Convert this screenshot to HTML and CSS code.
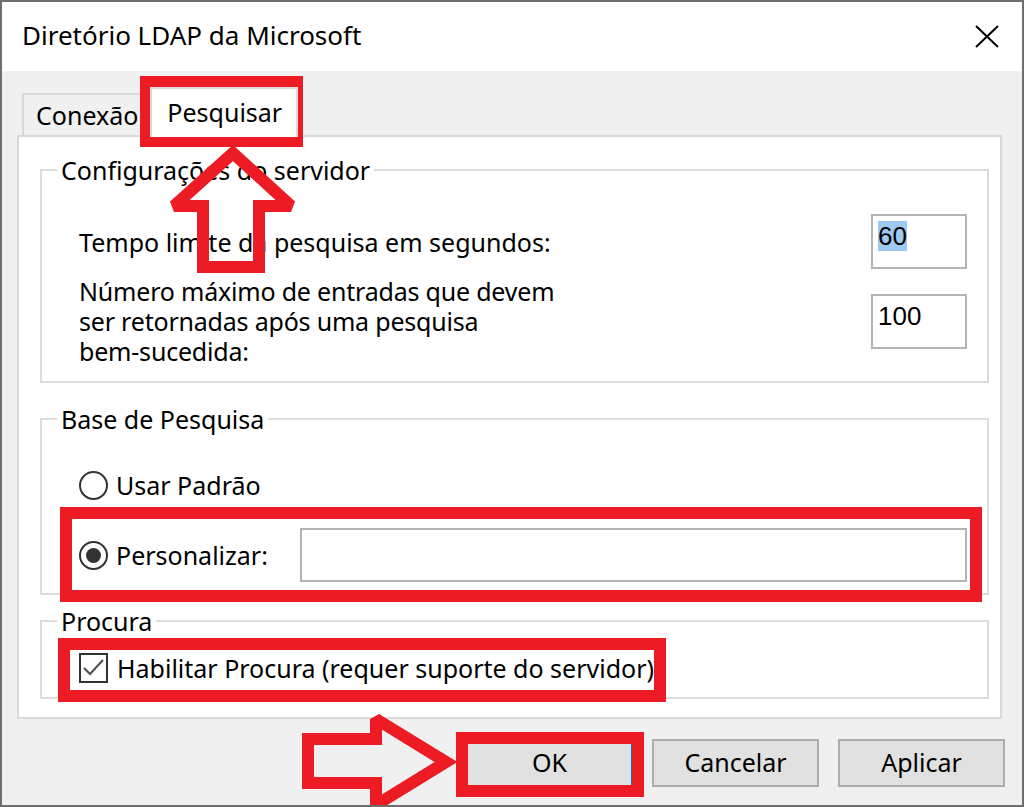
FILE: index.html
```html
<!DOCTYPE html>
<html>
<head>
<meta charset="utf-8"/>
<title>Diretório LDAP da Microsoft</title>
<link rel="stylesheet" href="styles.css">
</head>
<body>
<div class="window">

  <div class="titlebar">
    <span class="title">Diretório LDAP da Microsoft</span>
    <svg class="close" width="24" height="23" viewBox="0 0 24 23">
      <path d="M1 1 L23 22 M23 1 L1 22" stroke="#000" stroke-width="2" fill="none"/>
    </svg>
  </div>

  <div class="main">
    <div class="tabs">
      <div class="tab">Conexão</div>
      <div class="tab tab-active">Pesquisar</div>
    </div>

    <div class="panel">

      <div class="group group-server">
        <div class="group-title">Configurações do servidor</div>
        <div class="field-row row-first">
          <div class="label">Tempo limite da pesquisa em segundos:</div>
          <div class="edit"><span class="selected">60</span></div>
        </div>
        <div class="field-row row-second">
          <div class="label label-multi">
            <div>Número máximo de entradas que devem</div>
            <div>ser retornadas após uma pesquisa</div>
            <div>bem-sucedida:</div>
          </div>
          <div class="edit">100</div>
        </div>
      </div>

      <div class="group group-base">
        <div class="group-title">Base de Pesquisa</div>
        <div class="option option-default">
          <span class="radio"></span>
          <span>Usar Padrão</span>
        </div>
        <div class="option option-custom">
          <span class="radio checked"></span>
          <span class="option-label">Personalizar:</span>
          <div class="edit edit-wide"></div>
        </div>
      </div>

      <div class="group group-browse">
        <div class="group-title">Procura</div>
        <div class="option option-check">
          <span class="checkbox">
            <svg width="25" height="26" viewBox="0 0 25 26">
              <path d="M3 13 L9 19 L22 5" stroke="#4d4d4d" stroke-width="2" fill="none"/>
            </svg>
          </span>
          <span>Habilitar Procura (requer suporte do servidor)</span>
        </div>
      </div>

    </div>

    <div class="buttons">
      <div class="button button-default">OK</div>
      <div class="button">Cancelar</div>
      <div class="button">Aplicar</div>
    </div>
  </div>

  <!-- red annotations drawn over the dialog -->
  <svg class="marks" width="1024" height="807" viewBox="0 0 1024 807">
    <g fill="none" stroke="#ed1c24" stroke-width="12" stroke-linejoin="miter" stroke-miterlimit="2">
      <rect x="146" y="82" width="151" height="59"/>
      <rect x="66" y="513" width="910" height="83"/>
      <rect x="64" y="644" width="596" height="52"/>
      <rect x="462" y="738" width="176" height="53"/>
      <polygon points="233,153 174,206 203,206 203,267 259,267 259,206 291,206"/>
      <polygon points="308,739 376,739 376,719 446,762 376,805 376,783 308,783"/>
    </g>
  </svg>

</div>
</body>
</html>
```

FILE: styles.css
```css
body {
  margin: 0;
  font-family: "Noto Sans", sans-serif;
  font-size: 25px;
  color: #000;
  background: #6e6e6e;
}

.window {
  position: relative;
  width: 1024px;
  height: 807px;
  box-sizing: border-box;
  border: 2px solid #6e6e6e;
  background: #f0f0f0;
  overflow: hidden;
}

/* title bar */
.titlebar {
  height: 69px;
  box-sizing: border-box;
  background: #fff;
  display: flex;
  align-items: center;
  justify-content: space-between;
  padding: 0 23px 4px 20px;
}

.title {
  font-size: 26px;
}

.close {
  display: block;
  margin-top: 4px;
}

.main {
  padding: 16px 17px 0 15px;
}

/* tabs */
.tabs {
  display: flex;
  align-items: flex-end;
  height: 48px;
  padding-left: 5px;
}

.tab {
  height: 42px;
  box-sizing: border-box;
  border: 2px solid #d9d9d9;
  border-bottom: none;
  background: #f0f0f0;
  padding: 0 12px;
  line-height: 40px;
}

.tab-active {
  position: relative;
  z-index: 1;
  height: 50px;
  margin: 0 0 -2px -2px;
  padding: 0 14px 0 15px;
  background: #fff;
  line-height: 46px;
}

/* tab page */
.panel {
  height: 584px;
  box-sizing: border-box;
  margin-right: 3px;
  border: 2px solid #d9d9d9;
  background: #fff;
  padding: 32px 11px 0 21px;
}

.group {
  border: 2px solid #dcdcdc;
  padding: 0 20px 14px 37px;
}

.group-title {
  width: fit-content;
  margin: -16px 0 0 -22px;
  padding: 0 4px;
  background: #fff;
  line-height: 30px;
}

.group-server {
  padding-bottom: 15px;
}

.group-base {
  margin-top: 35px;
  padding-bottom: 11px;
}

.group-browse {
  margin-top: 25px;
}

.field-row {
  display: flex;
  align-items: center;
  justify-content: space-between;
}

.row-first {
  margin-top: 29px;
}

.row-second {
  margin-top: 7px;
}

.label {
  line-height: 30px;
}

.label-multi {
  letter-spacing: -0.2px;
}

.label-multi div {
  height: 30px;
}

.edit {
  width: 96px;
  height: 55px;
  box-sizing: border-box;
  border: 2px solid #b4b4b4;
  background: #fff;
  padding: 5px 5px 0;
  font-family: "Liberation Sans", Arial, sans-serif;
  font-size: 26px;
  line-height: 30px;
}

.edit .selected {
  background: #9ec9f0;
}

.edit-wide {
  flex: 1;
  height: 54px;
}

/* radios and checkbox */
.option {
  display: flex;
  align-items: center;
  line-height: 30px;
}

.option-default {
  margin-top: 36px;
  gap: 8px;
}

.option-custom {
  margin-top: 28px;
  gap: 8px;
}

.option-custom .option-label {
  width: 176px;
}

.option-check {
  margin-top: 17px;
  gap: 9px;
}

.radio {
  width: 29px;
  height: 29px;
  box-sizing: border-box;
  border: 2px solid #333;
  border-radius: 50%;
  background: #fff;
  display: flex;
  align-items: center;
  justify-content: center;
}

.radio.checked::after {
  content: "";
  width: 15px;
  height: 15px;
  border-radius: 50%;
  background: #333;
}

.checkbox {
  width: 29px;
  height: 30px;
  box-sizing: border-box;
  border: 2px solid #333;
  background: #fff;
}

.checkbox svg {
  display: block;
}

/* dialog buttons */
.buttons {
  display: flex;
  justify-content: flex-end;
  gap: 19px;
  margin-top: 20px;
}

.button {
  width: 167px;
  height: 48px;
  box-sizing: border-box;
  border: 2px solid #adadad;
  background: #e1e1e1;
  text-align: center;
  line-height: 42px;
}

.button-default {
  border-color: #0078d7;
}

/* annotations */
.marks {
  position: absolute;
  left: -2px;
  top: -2px;
  pointer-events: none;
}
```
